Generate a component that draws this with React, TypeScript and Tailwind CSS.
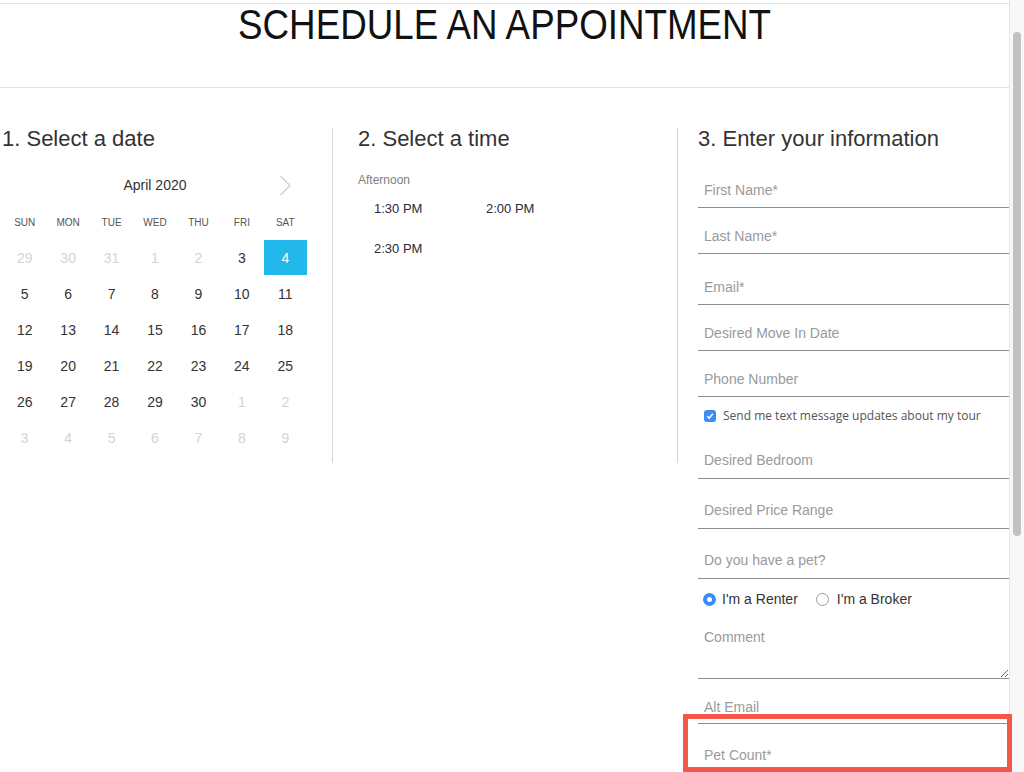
import React from "react";

const sans = "font-['Liberation_Sans',Arial,sans-serif]";

const days = ["SUN", "MON", "TUE", "WED", "THU", "FRI", "SAT"];

// [day, muted]
const weeks: [number, boolean][][] = [
  [[29, true], [30, true], [31, true], [1, true], [2, true], [3, false], [4, false]],
  [[5, false], [6, false], [7, false], [8, false], [9, false], [10, false], [11, false]],
  [[12, false], [13, false], [14, false], [15, false], [16, false], [17, false], [18, false]],
  [[19, false], [20, false], [21, false], [22, false], [23, false], [24, false], [25, false]],
  [[26, false], [27, false], [28, false], [29, false], [30, false], [1, true], [2, true]],
  [[3, true], [4, true], [5, true], [6, true], [7, true], [8, true], [9, true]],
];

const Field = ({
  placeholder,
  className,
}: {
  placeholder: string;
  className: string;
}) => (
  <input
    type="text"
    placeholder={placeholder}
    className={`block w-full box-border border-b border-[#8e8e8e] bg-transparent px-[6px] pt-[2px] text-[14px] text-[#333] placeholder:text-[#9a9a9a] outline-none ${className}`}
  />
);

const Calendar = () => (
  <div className="ml-[3px] w-[304px]">
    <div className="mt-[22px] grid h-[26px] grid-cols-7 items-center">
      <div />
      <div className="col-span-5 text-center text-[14px] text-[#333]">April 2020</div>
      <div className="flex justify-center">
        <svg width="13" height="21" viewBox="0 0 13 21" fill="none">
          <path d="M1.5 1 L11 10.5 L1.5 20" stroke="#cfcfcf" strokeWidth="1.3" />
        </svg>
      </div>
    </div>
    <div className="mt-[14px] grid h-[20px] grid-cols-7 items-center">
      {days.map((d) => (
        <div key={d} className="text-center text-[10px] text-[#555]">
          {d}
        </div>
      ))}
    </div>
    <div className="mt-[8px]">
      {weeks.map((w, i) => (
        <div key={i} className="grid h-[36px] grid-cols-7">
          {w.map(([n, muted], j) => {
            const selected = i === 0 && j === 6;
            return (
              <div
                key={j}
                className={`flex h-[35px] items-center justify-center pt-[1px] text-[14px] ${
                  selected
                    ? "bg-[#22b8eb] text-white"
                    : muted
                    ? "text-[#d4d4d4]"
                    : "text-[#333]"
                }`}
              >
                {n}
              </div>
            );
          })}
        </div>
      ))}
    </div>
  </div>
);

const Times = () => (
  <div>
    <div className="mt-[22px] flex h-[16px] items-center text-[12px] text-[#808080]">
      Afternoon
    </div>
    <div className="grid w-[224px] grid-cols-2 pt-[1px]">
      {["1:30 PM", "2:00 PM", "2:30 PM"].map((t) => (
        <div key={t} className="flex h-[40px] items-center pl-[16px] text-[13px] text-[#2a2a3a]">
          {t}
        </div>
      ))}
    </div>
  </div>
);

const Info = () => (
  <div>
    <Field placeholder="First Name*" className="mt-[21px] h-[37px]" />
    <Field placeholder="Last Name*" className="mt-[9px] h-[37px]" />
    <Field placeholder="Email*" className="mt-[14px] h-[37px]" />
    <Field placeholder="Desired Move In Date" className="mt-[9px] h-[37px]" />
    <Field placeholder="Phone Number" className="mt-[9px] h-[37px]" />

    <label className="mt-[9px] flex h-[20px] items-center gap-[7px] pl-[6px] font-['Open_Sans',sans-serif] text-[12px] text-[#555]">
      <span className="flex h-[12px] w-[12px] items-center justify-center rounded-[3px] bg-[#3c8cf4]">
        <svg width="8" height="8" viewBox="0 0 8 8" fill="none">
          <path d="M1.2 4.2 L3.2 6.1 L6.8 1.8" stroke="white" strokeWidth="1.5" />
        </svg>
      </span>
      Send me text message updates about my tour
    </label>

    <Field placeholder="Desired Bedroom" className="mt-[14px] h-[39px]" />
    <Field placeholder="Desired Price Range" className="mt-[11px] h-[39px]" />
    <Field placeholder="Do you have a pet?" className="mt-[11px] h-[39px]" />

    <div className="mt-[10px] flex h-[20px] items-center pl-[5px] text-[14px] text-[#333]">
      <span className="flex h-[13px] w-[13px] items-center justify-center rounded-full bg-[#3a8cf4]">
        <span className="h-[5px] w-[5px] rounded-full bg-white" />
      </span>
      <span className="ml-[6px]">I'm a Renter</span>
      <span className="ml-[18px] h-[13px] w-[13px] rounded-full border border-[#9a9a9a] bg-white" />
      <span className="ml-[8px]">I'm a Broker</span>
    </div>

    <textarea
      placeholder="Comment"
      className="mt-[10px] block h-[60px] w-full box-border border-b border-[#8e8e8e] bg-transparent px-[6px] pt-[8px] text-[14px] text-[#333] placeholder:text-[#9a9a9a] outline-none"
    />

    <Field placeholder="Alt Email" className="mt-[10px] h-[35px]" />
    <Field placeholder="Pet Count*" className="mt-[12px] h-[37px]" />
  </div>
);

export default function App() {
  return (
    <div className={`relative flex h-[772px] w-[1024px] overflow-hidden bg-white ${sans}`}>
      <div className="w-[1009px] pt-[3px]">
        <div className="border-t border-[#e2e2e2]">
          <header className="flex h-[84px] box-border justify-center border-b border-[#e2e2e2]">
            <h1 className="inline-block origin-top scale-x-[0.875] text-[42px] leading-none font-normal text-[#111]">
              SCHEDULE AN APPOINTMENT
            </h1>
          </header>

          <div className="mt-[40px] flex items-start">
            <section className="h-[335px] w-[333px] border-r border-[#d6d6d6] pl-[2px]">
              <h2 className="text-[22px] leading-[22px] text-[#333]">1. Select a date</h2>
              <div className="-ml-[2px]">
                <Calendar />
              </div>
            </section>

            <section className="h-[335px] w-[345px] border-r border-[#d6d6d6] pl-[25px]">
              <h2 className="text-[22px] leading-[22px] text-[#333]">2. Select a time</h2>
              <Times />
            </section>

            <section className="flex-1 pl-[20px]">
              <h2 className="text-[22px] leading-[22px] text-[#333]">3. Enter your information</h2>
              <Info />
            </section>
          </div>
        </div>
      </div>

      {/* scrollbar */}
      <div className="w-[15px] border-l border-[#e6e6e6] bg-[#f8f8f8] pt-[32px] pl-[3px]">
        <div className="h-[504px] w-[8px] rounded-full bg-[#c1c1c1]" />
      </div>

      {/* highlight annotation */}
      <div className="pointer-events-none absolute left-[683px] top-[714px] h-[58px] w-[329px] rounded-[1px] border-[5px] border-[#f4574a]" />
    </div>
  );
}
